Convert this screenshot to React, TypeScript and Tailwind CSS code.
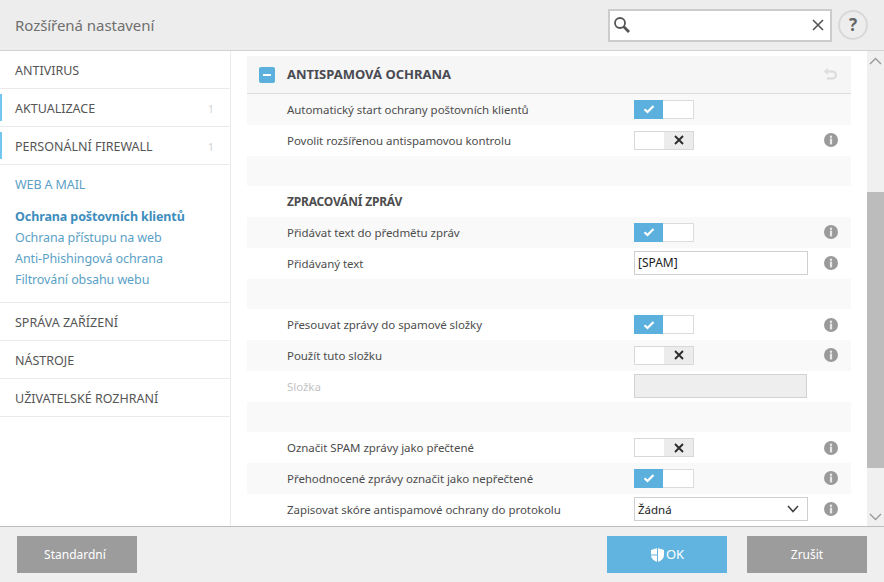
import React from "react";

const font = { fontFamily: '"Noto Sans", sans-serif' };

function Info() {
  return (
    <svg width="14" height="14" viewBox="0 0 14 14">
      <circle cx="7" cy="7" r="7" fill="#9a9a9a" />
      <circle cx="7" cy="3.7" r="1.2" fill="#e8e8e8" />
      <rect x="5.9" y="5.6" width="2.2" height="5.8" fill="#e8e8e8" />
    </svg>
  );
}

function Toggle({ on }: { on: boolean }) {
  if (on) {
    return (
      <div className="flex h-[19px] w-[60px] border border-[#dcdcdc] bg-white">
        <div className="flex w-[29px] items-center justify-center bg-[#5cb0dd] -ml-px -my-px h-[19px]">
          <svg width="12" height="10" viewBox="0 0 12 10">
            <path d="M1.5 5.2 4.5 8 10.5 2" fill="none" stroke="#fff" strokeWidth="2.2" />
          </svg>
        </div>
      </div>
    );
  }
  return (
    <div className="flex h-[19px] w-[60px] justify-end border border-[#d8d8d8] bg-white">
      <div className="flex w-[29px] items-center justify-center bg-[#ececec]">
        <svg width="10" height="10" viewBox="0 0 10 10">
          <path d="M1 1 9 9M9 1 1 9" fill="none" stroke="#2c2c2c" strokeWidth="1.9" />
        </svg>
      </div>
    </div>
  );
}

type RowProps = {
  label?: string;
  alt?: boolean;
  info?: boolean;
  control?: React.ReactNode;
  dim?: boolean;
  bold?: boolean;
};

function Row({ label, alt, info, control, dim, bold }: RowProps) {
  return (
    <div className={`flex h-[30.75px] items-center ${alt ? "bg-[#f9f9f9]" : "bg-white"}`}>
      <div
        className={`w-[387px] shrink-0 pl-10 whitespace-nowrap ${
          dim ? "text-[#c4c4c4]" : "text-[#4d4d4d]"
        } ${bold ? "text-[12px] font-bold tracking-[-0.2px]" : "text-[11.5px] tracking-[-0.05px]"}`}
      >
        {label}
      </div>
      <div className="w-[190px] shrink-0">{control}</div>
      <div className="flex w-[14px] shrink-0 items-center">{info && <Info />}</div>
    </div>
  );
}

function NavItem({ label, count }: { label: string; count?: boolean }) {
  return (
    <div className="relative flex h-[38px] items-center justify-between border-b border-[#ebebeb] pt-[4px] pr-[16px] pl-[15px] text-[12.5px] text-[#555]">
      {count && <div className="absolute top-[5px] left-0 h-[27px] w-[2px] bg-[#73c7ef]" />}
      <span>{label}</span>
      {count && <span className="text-[11px] text-[#d4d4d4]">1</span>}
    </div>
  );
}

export default function App() {
  return (
    <div className="flex h-[582px] w-[884px] flex-col overflow-hidden bg-white" style={font}>
      <header className="flex h-[51px] shrink-0 items-center border-b border-[#d2d2d2] bg-[#ededed] pr-[16px] pl-[15px]">
        <div className="flex-1 text-[15px] tracking-[-0.05px] text-[#6f6f6f]">Rozšířená nastavení</div>
        <div className="flex h-[33px] w-[224px] items-center justify-between border-2 border-[#cccccc] bg-white pr-[6px] pl-[3px]">
          <svg width="18" height="18" viewBox="0 0 18 18">
            <circle cx="7" cy="7" r="5" fill="none" stroke="#555" strokeWidth="1.8" />
            <path d="M10.8 10.8 16 16" stroke="#555" strokeWidth="2.8" />
          </svg>
          <svg width="12" height="12" viewBox="0 0 12 12">
            <path d="M1 1 11 11M11 1 1 11" stroke="#555" strokeWidth="1.6" fill="none" />
          </svg>
        </div>
        <div className="ml-[6px] flex h-[30px] w-[30px] items-center justify-center rounded-full border-2 border-[#d8d8d8] text-[17px] font-bold text-[#666]">
          ?
        </div>
      </header>

      <div className="flex min-h-0 flex-1">
        <aside className="w-[231px] shrink-0 border-r border-[#ebebeb]">
          <NavItem label="ANTIVIRUS" />
          <NavItem label="AKTUALIZACE" count />
          <NavItem label="PERSONÁLNÍ FIREWALL" count />
          <div className="h-[138px] border-b border-[#ebebeb] pt-[10px] pl-[15px] text-[12.5px] tracking-[-0.1px] text-[#5b9fc6]">
            <div className="h-[21px] leading-[19px]">WEB A MAIL</div>
            <div className="mt-[10px] h-[21px] leading-[21px] font-bold text-[#3d8dbd]">Ochrana poštovních klientů</div>
            <div className="h-[21px] leading-[21px]">Ochrana přístupu na web</div>
            <div className="h-[21px] leading-[21px]">Anti-Phishingová ochrana</div>
            <div className="h-[21px] leading-[21px]">Filtrování obsahu webu</div>
          </div>
          <NavItem label="SPRÁVA ZAŘÍZENÍ" />
          <NavItem label="NÁSTROJE" />
          <NavItem label="UŽIVATELSKÉ ROZHRANÍ" />
        </aside>

        <main className="min-w-0 flex-1 overflow-hidden pt-[5px] pl-[16px]">
          <div className="w-[604px]">
            <div className="flex h-[38px] items-center justify-between border-b border-[#dcdcdc] bg-[#f6f6f6] pr-[14px] pl-[12px]">
              <div className="flex items-center gap-[12px]">
                <div className="flex h-[16px] w-[16px] items-center justify-center rounded-[2px] bg-[#5cb0dd]">
                  <div className="h-[2px] w-[8px] bg-white" />
                </div>
                <span className="text-[13px] font-bold text-[#4a4a52]">ANTISPAMOVÁ OCHRANA</span>
              </div>
              <svg width="14" height="13" viewBox="0 0 14 13">
                <path d="M0.500 3.500 5 0v7z" fill="#dedede" />
                <path d="M4.500 3.500H9.500a3.200 3.200 0 0 1 0 7H4" fill="none" stroke="#dedede" strokeWidth="2.400" />
              </svg>
            </div>
            <Row label="Automatický start ochrany poštovních klientů" alt control={<Toggle on />} />
            <Row label="Povolit rozšířenou antispamovou kontrolu" info control={<Toggle on={false} />} />
            <Row alt />
            <Row label="ZPRACOVÁNÍ ZPRÁV" bold />
            <Row label="Přidávat text do předmětu zpráv" alt info control={<Toggle on />} />
            <Row
              label="Přidávaný text"
              info
              control={
                <div className="flex h-[24px] w-[174px] items-center border border-[#cfcfcf] bg-white pl-[3px] text-[12px] text-[#222]">
                  [SPAM]
                </div>
              }
            />
            <Row alt />
            <Row label="Přesouvat zprávy do spamové složky" info control={<Toggle on />} />
            <Row label="Použít tuto složku" alt info control={<Toggle on={false} />} />
            <Row
              label="Složka"
              dim
              control={<div className="h-[24px] w-[173px] border border-[#d2d2d2] bg-[#eeeeee]" />}
            />
            <Row alt />
            <Row label="Označit SPAM zprávy jako přečtené" info control={<Toggle on={false} />} />
            <Row label="Přehodnocené zprávy označit jako nepřečtené" alt info control={<Toggle on />} />
            <Row
              label="Zapisovat skóre antispamové ochrany do protokolu"
              info
              control={
                <div className="flex h-[24px] w-[174px] items-center justify-between border border-[#cfcfcf] bg-white pr-[8px] pl-[3px] text-[11.5px] text-[#222]">
                  <span>Žádná</span>
                  <svg width="12" height="8" viewBox="0 0 12 8">
                    <path d="M1 1 6 6.500 11 1" fill="none" stroke="#444" strokeWidth="1.600" />
                  </svg>
                </div>
              }
            />
          </div>
        </main>

        <div className="flex w-[17px] shrink-0 flex-col bg-[#f0f0f0]">
          <div className="flex h-[141px] items-start justify-center pt-[6px]">
            <svg width="13" height="8" viewBox="0 0 13 8">
              <path d="M1 7 6.500 1.500 12 7" fill="none" stroke="#9a9a9a" strokeWidth="1.400" />
            </svg>
          </div>
          <div className="h-[276px] bg-[#bcbcbc]" />
          <div className="flex flex-1 items-end justify-center pb-[5px]">
            <svg width="13" height="8" viewBox="0 0 13 8">
              <path d="M1 1 6.500 6.500 12 1" fill="none" stroke="#9a9a9a" strokeWidth="1.400" />
            </svg>
          </div>
        </div>
      </div>

      <footer className="flex h-[56px] shrink-0 items-center border-t border-[#bdbdbd] bg-[#efefef] pr-[17px] pl-[17px]">
        <div className="flex h-[37px] w-[120px] items-center justify-center bg-[#9c9c9c] pr-[4px] text-[12px] text-white">
          Standardní
        </div>
        <div className="ml-auto flex h-[37px] w-[120px] items-center justify-center bg-[#62b4e0] text-[13px] text-white">
          <svg width="15" height="16" viewBox="0 0 15 16" className="mr-px">
            <path d="M7.500 1 14 3v5c0 3.500-3 6-6.500 7C4 14 1 11.500 1 8V3z" fill="#fff" />
            <path d="M7.500 1v7H1M7.500 8v7" stroke="#62b4e0" strokeWidth="1" fill="none" />
          </svg>
          <span>OK</span>
        </div>
        <div className="ml-[20px] flex h-[37px] w-[120px] items-center justify-center bg-[#9c9c9c] text-[12px] text-white">
          Zrušit
        </div>
      </footer>
    </div>
  );
}
